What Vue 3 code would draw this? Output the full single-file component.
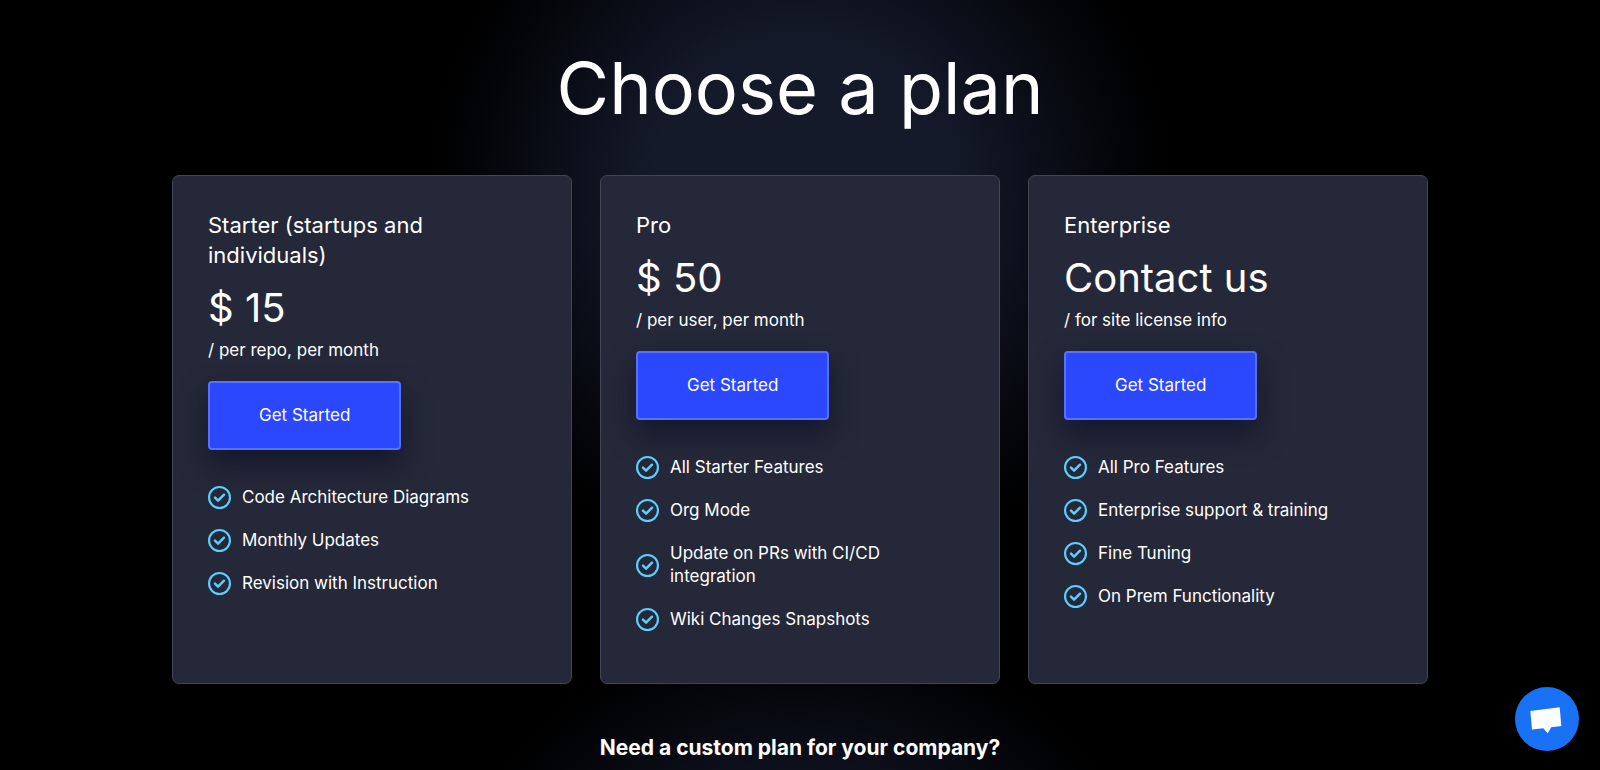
<script setup>
const plans = [
  {
    name: 'Starter (startups and individuals)',
    price: '$ 15',
    unit: '/ per repo, per month',
    features: ['Code Architecture Diagrams', 'Monthly Updates', 'Revision with Instruction'],
  },
  {
    name: 'Pro',
    price: '$ 50',
    unit: '/ per user, per month',
    features: ['All Starter Features', 'Org Mode', 'Update on PRs with CI/CD integration', 'Wiki Changes Snapshots'],
  },
  {
    name: 'Enterprise',
    price: 'Contact us',
    unit: '/ for site license info',
    features: ['All Pro Features', 'Enterprise support & training', 'Fine Tuning', 'On Prem Functionality'],
  },
]
</script>

<template>
  <main class="pricing">
    <h1 class="title">Choose a plan</h1>
    <div class="plans">
      <section v-for="plan in plans" :key="plan.name" class="card">
        <h2 class="name">{{ plan.name }}</h2>
        <p class="price">{{ plan.price }}</p>
        <p class="unit">{{ plan.unit }}</p>
        <button type="button" class="cta">Get Started</button>
        <ul class="features">
          <li v-for="feature in plan.features" :key="feature" class="feature">
            <svg class="check" viewBox="0 0 24 24" fill="none" aria-hidden="true">
              <circle cx="12" cy="12" r="10.9" stroke="currentColor" stroke-width="2.2" />
              <path d="M7.3 12.2l3.2 3.1 6.2-6.2" stroke="currentColor" stroke-width="2.6" stroke-linecap="round" stroke-linejoin="round" />
            </svg>
            <span>{{ feature }}</span>
          </li>
        </ul>
      </section>
    </div>
    <h3 class="custom">Need a custom plan for your company?</h3>
    <button type="button" class="chat" aria-label="Open chat">
      <svg viewBox="0 0 64 64" aria-hidden="true">
        <path d="M15.3 24L44.7 20.3L46.3 39L36.2 40.3L32.7 46.3L28.3 41.2L17 42.4Z" fill="#fff" />
      </svg>
    </button>
  </main>
</template>

<style>
html,
body {
  background: #000;
}
</style>

<style scoped>
.pricing {
  box-sizing: border-box;
  min-height: 100vh;
  padding: 45px 24px 8px;
  color: #fff;
  font-family: Inter, "Liberation Sans", sans-serif;
  background:
    radial-gradient(circle 375px at 50% 200px, #151a2b 0, #151a2b 40%, #0b0e18 66%, #030407 88%, transparent 100%),
    radial-gradient(circle 375px at 50% 995px, #151a2b 0, #151a2b 40%, #0b0e18 66%, #030407 88%, transparent 100%),
    #000;
}

.title {
  margin: 0 0 44px;
  font-size: 72px;
  line-height: 86px;
  font-weight: 400;
  text-align: center;
}

.plans {
  display: grid;
  grid-template-columns: repeat(3, 1fr);
  gap: 28px;
  max-width: 1256px;
  margin: 0 auto;
}

.card {
  padding: 34px 35px 52px;
  border: 1px solid #434652;
  border-radius: 7px;
  background: #252838;
}

.name {
  max-width: 260px;
  margin: 0;
  font-size: 22px;
  line-height: 30px;
  font-weight: 400;
}

.price {
  margin: 14px 0 5px;
  font-size: 40px;
  line-height: 48px;
}

.unit {
  margin: 0 0 18px;
  font-size: 17px;
  line-height: 26px;
}

.cta {
  display: block;
  padding: 21px 49px;
  border: 2px solid #5a70ff;
  border-radius: 4px;
  background: #2b48ff;
  box-shadow: 0 14px 28px rgba(10, 14, 36, 0.6);
  color: #fff;
  font-family: inherit;
  font-size: 17px;
  line-height: 23px;
  cursor: pointer;
}

.features {
  display: flex;
  flex-direction: column;
  gap: 20px;
  margin: 36px 0 0;
  padding: 0;
  list-style: none;
}

.feature {
  display: flex;
  align-items: center;
  gap: 11px;
  max-width: 270px;
  font-size: 17px;
  line-height: 23px;
}

.check {
  flex: none;
  width: 23px;
  height: 23px;
  color: #5ccfff;
}

.custom {
  margin: 50px 0 0;
  font-size: 21px;
  line-height: 28px;
  font-weight: 700;
  text-align: center;
}

.chat {
  position: fixed;
  right: 21px;
  bottom: 19px;
  width: 64px;
  height: 64px;
  padding: 0;
  border: 0;
  border-radius: 50%;
  background: #1972f5;
  cursor: pointer;
}

.chat svg {
  display: block;
  width: 64px;
  height: 64px;
}
</style>
